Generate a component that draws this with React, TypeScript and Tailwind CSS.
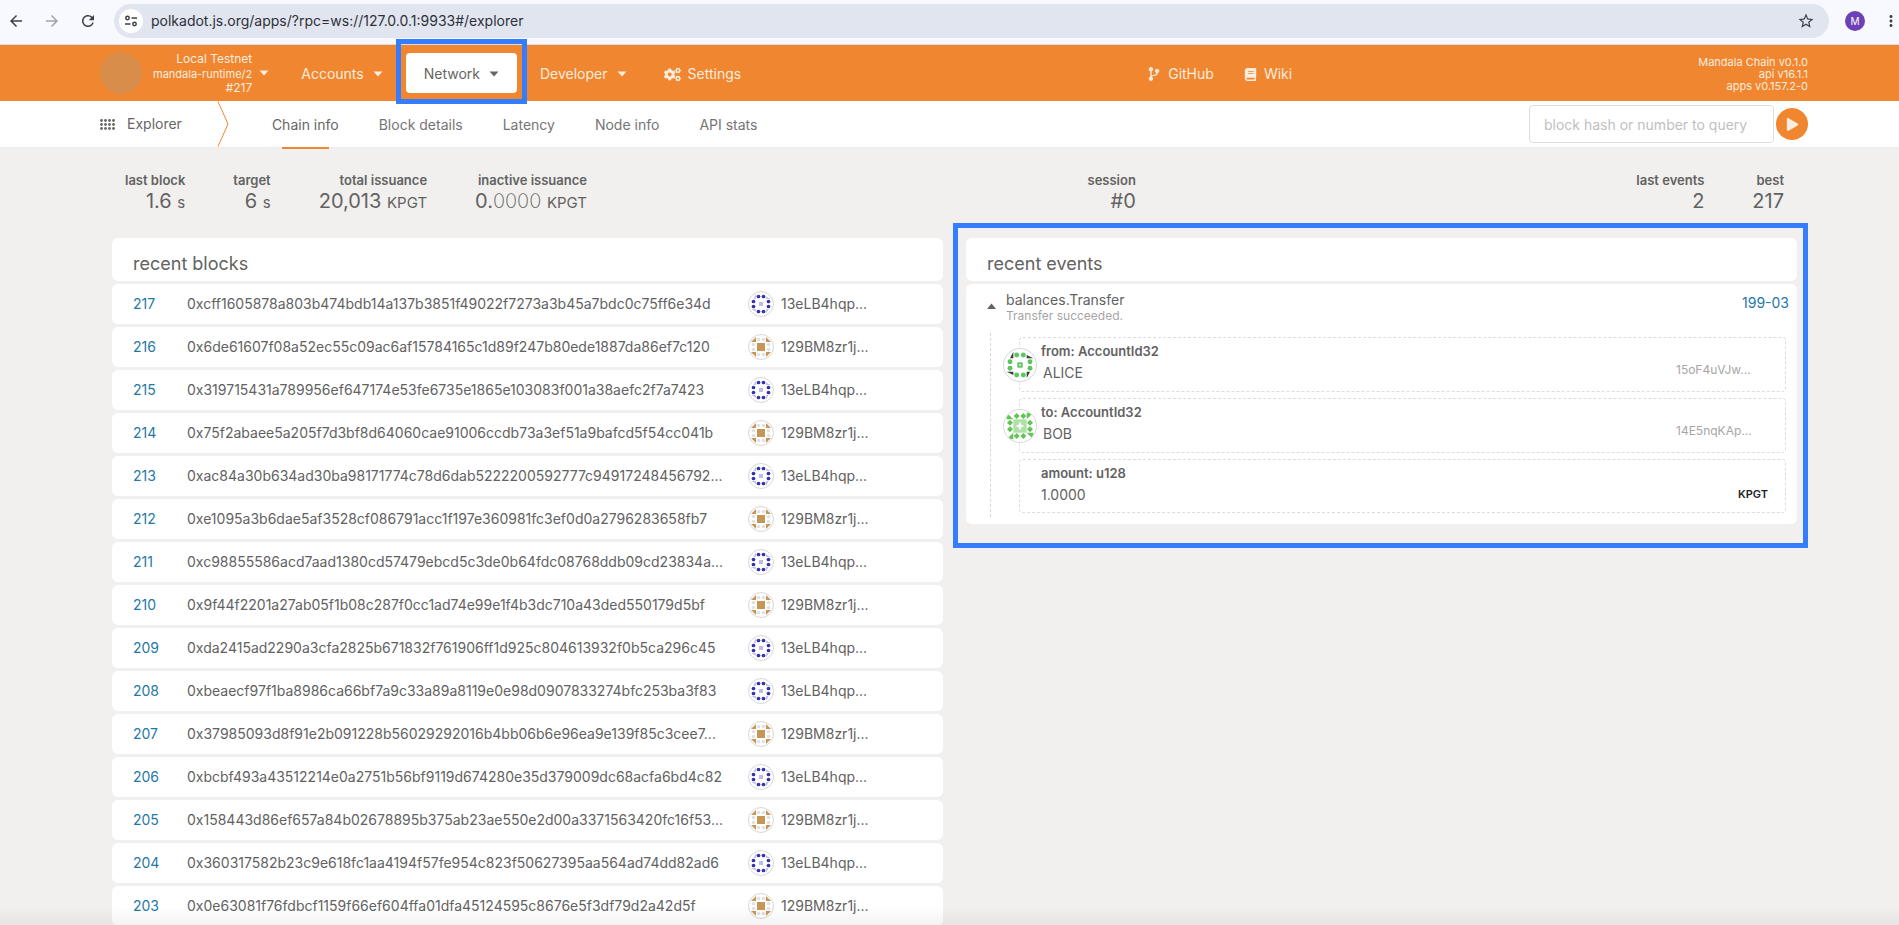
import type { ReactNode } from "react";
import { FaBook, FaCodeBranch, FaCogs, FaPlay } from "react-icons/fa";
import {
  MdArrowBack,
  MdArrowForward,
  MdMoreVert,
  MdRefresh,
  MdStarBorder,
} from "react-icons/md";

type IconKind = "blue" | "brown" | "alice" | "bob";

const blocks: { id: number; hash: string; kind: IconKind }[] = [
  { id: 217, hash: "0xcff1605878a803b474bdb14a137b3851f49022f7273a3b45a7bdc0c75ff6e34d", kind: "blue" },
  { id: 216, hash: "0x6de61607f08a52ec55c09ac6af15784165c1d89f247b80ede1887da86ef7c120", kind: "brown" },
  { id: 215, hash: "0x319715431a789956ef647174e53fe6735e1865e103083f001a38aefc2f7a7423", kind: "blue" },
  { id: 214, hash: "0x75f2abaee5a205f7d3bf8d64060cae91006ccdb73a3ef51a9bafcd5f54cc041b", kind: "brown" },
  { id: 213, hash: "0xac84a30b634ad30ba98171774c78d6dab5222200592777c94917248456792...", kind: "blue" },
  { id: 212, hash: "0xe1095a3b6dae5af3528cf086791acc1f197e360981fc3ef0d0a2796283658fb7", kind: "brown" },
  { id: 211, hash: "0xc98855586acd7aad1380cd57479ebcd5c3de0b64fdc08768ddb09cd23834a...", kind: "blue" },
  { id: 210, hash: "0x9f44f2201a27ab05f1b08c287f0cc1ad74e99e1f4b3dc710a43ded550179d5bf", kind: "brown" },
  { id: 209, hash: "0xda2415ad2290a3cfa2825b671832f761906ff1d925c804613932f0b5ca296c45", kind: "blue" },
  { id: 208, hash: "0xbeaecf97f1ba8986ca66bf7a9c33a89a8119e0e98d0907833274bfc253ba3f83", kind: "blue" },
  { id: 207, hash: "0x37985093d8f91e2b091228b56029292016b4bb06b6e96ea9e139f85c3cee7...", kind: "brown" },
  { id: 206, hash: "0xbcbf493a43512214e0a2751b56bf9119d674280e35d379009dc68acfa6bd4c82", kind: "blue" },
  { id: 205, hash: "0x158443d86ef657a84b02678895b375ab23ae550e2d00a3371563420fc16f53...", kind: "brown" },
  { id: 204, hash: "0x360317582b23c9e618fc1aa4194f57fe954c823f50627395aa564ad74dd82ad6", kind: "blue" },
  { id: 203, hash: "0x0e63081f76fdbcf1159f66ef604ffa01dfa45124595c8676e5f3df79d2a42d5f", kind: "brown" },
];

const tabs = ["Chain info", "Block details", "Latency", "Node info", "API stats"];

// 4x4 cell identicon: one quadrant is described and turned three times
const icons: Record<
  IconKind,
  { corner: string; cornerFill: string; side: "dot" | "diamond"; sideFill: string; center: ReactNode }
> = {
  blue: {
    corner: "0.5,1 1,1 1,0",
    cornerFill: "#c3c1ec",
    side: "dot",
    sideFill: "#3433b0",
    center: <rect x="1.6" y="1.6" width="0.8" height="0.8" fill="#bdbbe9" />,
  },
  brown: {
    corner: "0,1 1,1 1,0",
    cornerFill: "#c69657",
    side: "dot",
    sideFill: "#e2e2e2",
    center: <rect x="1.2" y="1.2" width="1.6" height="1.6" fill="#c69657" />,
  },
  alice: {
    corner: "0.5,1 1,1 1,0",
    cornerFill: "#3c3c3c",
    side: "dot",
    sideFill: "#59c75c",
    center: <rect x="1.73" y="1.73" width="0.54" height="0.54" fill="#c9efca" stroke="#59c75c" strokeWidth="0.26" />,
  },
  bob: {
    corner: "0,0 0,1 1,1",
    cornerFill: "#62c454",
    side: "diamond",
    sideFill: "#62c454",
    center: (
      <>
        <rect x="1" y="1" width="2" height="2" fill="#afe1a7" />
        <path d="M2 1.3 2.2 1.8 2.7 2 2.2 2.2 2 2.7 1.8 2.2 1.3 2 1.8 1.8Z" fill="#fff" />
      </>
    ),
  },
};

function Identicon({ kind, className }: { kind: IconKind; className: string }) {
  const icon = icons[kind];
  return (
    <svg
      viewBox="-0.4 -0.4 4.8 4.8"
      aria-hidden="true"
      className={`shrink-0 overflow-hidden rounded-full border border-[#d8d8d8] bg-white ${className}`}
    >
      {[0, 90, 180, 270].map((angle) => (
        <g key={angle} transform={`rotate(${angle} 2 2)`}>
          <polygon points={icon.corner} fill={icon.cornerFill} />
          {[1.5, 2.5].map((x) =>
            icon.side === "dot" ? (
              <circle key={x} cx={x} cy="0.5" r="0.37" fill={icon.sideFill} />
            ) : (
              <polygon
                key={x}
                points={`${x},0.05 ${x + 0.45},0.5 ${x},0.95 ${x - 0.45},0.5`}
                fill={icon.sideFill}
              />
            )
          )}
        </g>
      ))}
      {icon.center}
    </svg>
  );
}

function Caret() {
  return (
    <svg viewBox="0 0 10 6" aria-hidden="true" className="h-[6px] w-[10px] shrink-0">
      <path d="M0.5 0.5h9L5 5.5Z" fill="currentColor" />
    </svg>
  );
}

function BrowserBar() {
  return (
    <div className="flex h-[45px] items-start border-b border-[#d6dbe6] bg-[#f8f9fe] pt-1 text-[#3c4048]">
      <div className="flex h-[34px] w-[114px] shrink-0 items-center gap-[18px] pl-[7px]">
        <button type="button" aria-label="Back">
          <MdArrowBack size={18} />
        </button>
        <button type="button" aria-label="Forward" className="text-[#a0a3a9]">
          <MdArrowForward size={18} />
        </button>
        <button type="button" aria-label="Reload">
          <MdRefresh size={18} />
        </button>
      </div>
      <div className="flex h-[34px] flex-1 items-center rounded-full bg-[#e1e5f0] pr-[14px] pl-[5px]">
        <button
          type="button"
          aria-label="Site information"
          className="flex size-6 items-center justify-center rounded-full bg-white"
        >
          <svg viewBox="0 0 14 12" fill="none" stroke="currentColor" strokeWidth="1.5" className="h-3 w-[14px]">
            <circle cx="3.5" cy="3" r="1.7" />
            <path d="M7.5 3h5.5M1 9h5.5" />
            <circle cx="10.5" cy="9" r="1.7" />
          </svg>
        </button>
        <input
          type="text"
          aria-label="Address"
          defaultValue="polkadot.js.org/apps/?rpc=ws://127.0.0.1:9933#/explorer"
          className="ml-2 flex-1 bg-transparent text-sm text-[#2e3138] outline-none"
        />
        <button type="button" aria-label="Bookmark">
          <MdStarBorder size={18} />
        </button>
      </div>
      <div className="flex h-[34px] w-[70px] shrink-0 items-center gap-[17px] pl-4">
        <button
          type="button"
          aria-label="Profile"
          className="size-5 shrink-0 rounded-full bg-[#6d41b5] text-[10px] text-white"
        >
          M
        </button>
        <button type="button" aria-label="Menu">
          <MdMoreVert size={18} />
        </button>
      </div>
    </div>
  );
}

function MenuItem({ children, active }: { children: ReactNode; active?: boolean }) {
  return (
    <div className="relative">
      <button
        type="button"
        className={`flex h-10 items-center gap-[9px] rounded px-[18px] pt-[2px] ${
          active ? "bg-white text-[#666]" : ""
        }`}
      >
        {children}
        <Caret />
      </button>
      {active && (
        <div className="pointer-events-none absolute -inset-x-[10px] -top-[14px] -bottom-[11px] border-5 border-[#347dff]" />
      )}
    </div>
  );
}

function Header() {
  return (
    <header className="flex h-14 items-center bg-[#f0862f] pr-[91px] pl-[100px] text-sm text-[#fdecdf]">
      <button type="button" className="flex items-center gap-[7px] text-right">
        <span className="mr-1 size-[42px] rounded-full bg-[#d88d4a]" />
        <span>
          <span className="block text-xs leading-[14px]">Local Testnet</span>
          <span className="block text-[11px] leading-4">mandala-runtime/2</span>
          <span className="block text-xs leading-3">#217</span>
        </span>
        <Caret />
      </button>
      <nav className="ml-[14px] flex items-center gap-[5px]">
        <MenuItem>Accounts</MenuItem>
        <MenuItem active>Network</MenuItem>
        <MenuItem>Developer</MenuItem>
        <a href="#settings" className="flex items-center gap-[7px] pt-[2px] pl-[14px]">
          <FaCogs size={17} />
          Settings
        </a>
      </nav>
      <div className="mx-auto flex gap-[30px] pt-[2px]">
        <a href="#github" className="flex items-center gap-[7px]">
          <FaCodeBranch size={14} />
          GitHub
        </a>
        <a href="#wiki" className="flex items-center gap-[7px]">
          <FaBook size={13} />
          Wiki
        </a>
      </div>
      <div className="pt-[2px] text-right text-[11px] leading-3">
        <div>Mandala Chain v0.1.0</div>
        <div>api v16.1.1</div>
        <div>apps v0.157.2-0</div>
      </div>
    </header>
  );
}

function TabBar() {
  return (
    <div className="flex h-[47px] items-center border-b border-[#ececec] bg-white pr-[91px] pl-[100px] text-sm text-[#757575]">
      <div className="flex items-center gap-3 text-[#666]">
        <svg viewBox="0 0 15 11" fill="currentColor" aria-hidden="true" className="h-[11px] w-[15px]">
          {[1.5, 5.5, 9.5, 13.5].map((x) =>
            [1.5, 5.5, 9.5].map((y) => <circle key={`${x}-${y}`} cx={x} cy={y} r="1.4" />)
          )}
        </svg>
        Explorer
      </div>
      <svg viewBox="0 0 12 46" fill="none" aria-hidden="true" className="ml-[35px] h-[46px] w-3">
        <path d="M1 0.5 11 23 1 45.5" stroke="#f0862f" />
      </svg>
      <nav className="ml-[43px] flex gap-10">
        {tabs.map((tab, i) => (
          <a
            key={tab}
            href="#explorer"
            className={`relative pt-[2px] leading-[44px] ${i === 0 ? "text-[#666]" : ""}`}
          >
            {tab}
            {i === 0 && <span className="absolute inset-x-[10px] -bottom-[2px] h-[2px] bg-[#f0862f]" />}
          </a>
        ))}
      </nav>
      <form className="ml-auto flex items-center gap-[2px]" onSubmit={(e) => e.preventDefault()}>
        <input
          type="text"
          aria-label="block hash or number to query"
          placeholder="block hash or number to query"
          className="h-[38px] w-[245px] rounded border border-[#dddddd] px-[14px] outline-none placeholder:text-[#bfbfbf]"
        />
        <button
          type="submit"
          aria-label="Query"
          className="flex size-8 items-center justify-center rounded-full bg-[#f0862f] text-[#fdecdf]"
        >
          <FaPlay size={13} />
        </button>
      </form>
    </div>
  );
}

function Stat({ label, children }: { label: string; children: ReactNode }) {
  return (
    <div className="text-right">
      <h2 className="text-[13px] leading-5 font-semibold">{label}</h2>
      <div className="text-xl leading-[22px]">{children}</div>
    </div>
  );
}

function Summary() {
  return (
    <section className="flex justify-between px-[13px]">
      <div className="flex gap-12">
        <Stat label="last block">
          1.6 <span className="text-[15px]">s</span>
        </Stat>
        <Stat label="target">
          6 <span className="text-[15px]">s</span>
        </Stat>
        <Stat label="total issuance">
          20,013 <span className="text-[15px]">KPGT</span>
        </Stat>
        <Stat label="inactive issuance">
          0.<span className="font-extralight">0000</span> <span className="text-[15px]">KPGT</span>
        </Stat>
      </div>
      <Stat label="session">#0</Stat>
      <div className="flex gap-12">
        <Stat label="last events">2</Stat>
        <Stat label="best">217</Stat>
      </div>
    </section>
  );
}

function RecentBlocks() {
  return (
    <table className="-my-[3px] w-full table-fixed border-separate border-spacing-x-0 border-spacing-y-[3px] text-sm">
      <colgroup>
        <col className="w-[75px]" />
        <col />
        <col className="w-[195px]" />
      </colgroup>
      <thead>
        <tr>
          <th colSpan={3} className="h-[43px] rounded-md bg-white px-[21px] pt-2 text-left text-lg font-normal">
            recent blocks
          </th>
        </tr>
      </thead>
      <tbody>
        {blocks.map((block) => (
          <tr key={block.id} className="h-10">
            <td className="rounded-l-md bg-white pl-[21px]">
              <a href="#block" className="text-[#1f78a7]">
                {block.id}
              </a>
            </td>
            <td className="bg-white whitespace-nowrap">{block.hash}</td>
            <td className="rounded-r-md bg-white">
              <div className="flex items-center gap-[7px]">
                <Identicon kind={block.kind} className="size-[26px]" />
                {block.kind === "blue" ? "13eLB4hqp..." : "129BM8zr1j..."}
              </div>
            </td>
          </tr>
        ))}
      </tbody>
    </table>
  );
}

function AccountParam({
  label,
  name,
  address,
  kind,
}: {
  label: string;
  name: string;
  address: string;
  kind: IconKind;
}) {
  return (
    <div className="relative h-[55px] rounded border border-dashed border-[#dddddd] pt-[5px] pr-4 pl-[21px]">
      <Identicon kind={kind} className="absolute top-[10px] -left-[17px] size-[34px]" />
      <div className="text-[13px] leading-4 font-semibold">{label}</div>
      <div className="flex items-start justify-between pt-1 pl-[2px]">
        <span className="text-sm leading-5">{name}</span>
        <span className="w-[93px] text-xs leading-[14px] text-[#a6a6a6]">{address}</span>
      </div>
    </div>
  );
}

function RecentEvents() {
  return (
    <section className="relative text-sm">
      <h1 className="h-[43px] rounded-md bg-white px-[21px] pt-3 text-lg leading-7">recent events</h1>
      <details open className="mt-[3px] rounded-md bg-white pr-[11px] pb-[7px] pl-[21px]">
        <summary className="flex list-none items-center gap-[9px] pt-2">
          <svg viewBox="0 0 10 6" aria-hidden="true" className="mb-1 h-[6px] w-[10px]">
            <path d="M0 6h9L4.500 0.500Z" fill="currentColor" />
          </svg>
          <div className="flex-1">
            <div className="leading-4">balances.Transfer</div>
            <div className="text-xs leading-4 text-[#a6a6a6]">Transfer succeeded.</div>
          </div>
          <a href="#event" className="-mr-[3px] mb-[10px] text-[#1f78a7]">
            199-03
          </a>
        </summary>
        <div className="mt-[9px] ml-[3px] flex flex-col gap-[6px] border-l border-dashed border-[#d8d8d8] pt-1 pb-1 pl-7">
          <AccountParam label="from: AccountId32" name="ALICE" address="15oF4uVJw..." kind="alice" />
          <AccountParam label="to: AccountId32" name="BOB" address="14E5nqKAp..." kind="bob" />
          <div className="h-[54px] rounded border border-dashed border-[#dddddd] pt-[5px] pr-[17px] pl-[21px]">
            <div className="text-[13px] leading-4 font-semibold">amount: u128</div>
            <div className="flex items-center justify-between pt-1">
              <span className="leading-5">1.0000</span>
              <span className="text-[11px] font-semibold text-[#222]">KPGT</span>
            </div>
          </div>
        </div>
      </details>
      <div className="pointer-events-none absolute -top-[15px] -right-[11px] -bottom-6 -left-[13px] border-5 border-[#347dff]" />
    </section>
  );
}

export default function App() {
  return (
    <div className="relative min-h-screen bg-[#f1f0ee] font-['Inter',sans-serif] text-[#626262]">
      <BrowserBar />
      <Header />
      <TabBar />
      <main className="flex flex-col gap-6 pt-[22px] pr-[102px] pl-28">
        <Summary />
        <div className="grid grid-cols-2 items-start gap-[23px]">
          <RecentBlocks />
          <RecentEvents />
        </div>
      </main>
      <div className="pointer-events-none absolute inset-x-0 bottom-0 h-5 bg-linear-to-b from-transparent to-black/5" />
    </div>
  );
}
